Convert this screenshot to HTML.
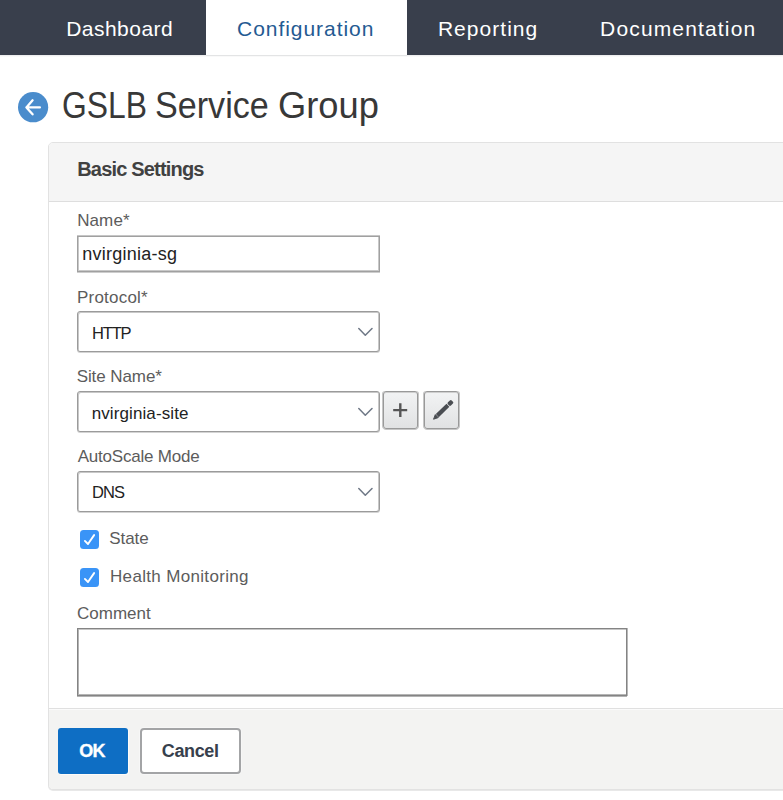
<!DOCTYPE html>
<html><head><meta charset="utf-8">
<style>
*{box-sizing:border-box;margin:0;padding:0}
html,body{width:783px;height:800px;overflow:hidden;background:#fff;font-family:"Liberation Sans",sans-serif;position:relative}
.a{position:absolute;white-space:nowrap;line-height:1}
#nav{position:absolute;left:0;top:0;width:783px;height:55px;background:#393f4c}
#navline{position:absolute;left:0;top:55px;width:783px;height:1px;background:#eeeeef;box-shadow:0 1px 0 #f9f9f9}
#navline2{position:absolute;left:206px;top:55px;width:201px;height:1px;background:#e3e4e5}
#tabw{position:absolute;left:206px;top:0;width:201px;height:55px;background:#fff}
.tab{font-size:21px;color:#fff}
.tt{font-size:36.5px;color:#383838}
#panel{position:absolute;left:48px;top:142px;width:800px;height:648px;border:1px solid #e2e2e2;border-radius:5px;box-shadow:0 1px 0 #e8e8e8;background:#fff;overflow:hidden}
#phead{position:absolute;left:0;top:0;width:100%;height:59px;background:#f5f5f5;border-bottom:1px solid #dedede}
#pfoot{position:absolute;left:0;top:565px;width:100%;height:84px;background:#f3f3f2;border-top:1px solid #e0e0e0;box-shadow:inset 0 1px 0 #fbfbfb}
.lbl{font-size:17px;color:#5c5c5c}
.val{color:#222}
.inp{position:absolute;border:1px solid #a0a0a0;background:#fff;box-shadow:0 -1px 0 #c6c6c6,0 1px 0 #cdcdcd,inset 1px 0 0 #c8c8c8,inset -1px 0 0 #c8c8c8,inset 0 -1px 0 #c8c8c8}
.ta{position:absolute;border:1px solid #848484;background:#fff;box-shadow:0 1px 0 #b3b3b3,1px 0 0 #b8b8b8,inset 1px 0 0 #b3b3b3,inset 0 1px 0 #c6c6c6,inset 0 -1px 0 #b5b5b5}
.sel{position:absolute;border:1px solid #9b9b9b;border-radius:3px;background:#fff;box-shadow:inset 1px 1px 0 #c8c8c8,inset -1px 0 0 #c8c8c8,0 1px 0 #d4d4d4}
.btn{position:absolute;border:1px solid #999;border-radius:3px;background:linear-gradient(#f2f3f4,#e1e2e3);box-shadow:0 1px 0 #c6c6c6,-1px 0 0 #c6c6c6,1px 0 0 #c6c6c6,inset 0 1px 0 #cfcfcf}
.cb{position:absolute;width:19px;height:19px;border-radius:3.5px;background:#3a94f7}
</style></head><body>
<div id="nav"></div>
<div id="navline"></div>
<div id="tabw"></div>
<div id="navline2"></div>
<div class="a tab" style="left:66.2px;top:18px;letter-spacing:0.47px">Dashboard</div>
<div class="a tab" style="left:237px;top:18px;letter-spacing:0.96px;color:#245a92">Configuration</div>
<div class="a tab" style="left:437.9px;top:18px;letter-spacing:1.04px">Reporting</div>
<div class="a tab" style="left:600.1px;top:18px;letter-spacing:1.15px">Documentation</div>

<svg style="position:absolute;left:18px;top:92px" width="31" height="31" viewBox="0 0 31 31">
<circle cx="15.1" cy="15.2" r="15.1" fill="#4a8ccc"/>
<path d="M14.6 8.3 L8.4 15.4 L14.6 22.3 M8.4 15.4 L21.9 15.4" stroke="#fff" stroke-width="2.3" fill="none" stroke-linecap="round" stroke-linejoin="round"/>
</svg>
<div class="a tt" style="left:61.9px;top:88.2px;transform:scaleX(0.872);transform-origin:0 0">GSLB</div>
<div class="a tt" style="left:155.3px;top:88.2px;transform:scaleX(0.935);transform-origin:0 0">Service</div>
<div class="a tt" style="left:278px;top:88.2px;transform:scaleX(0.994);transform-origin:0 0">Group</div>

<div id="panel">
  <div id="phead"></div>
  <div id="pfoot"></div>
</div>
<div class="a" style="left:77.2px;top:159px;font-size:20px;font-weight:bold;color:#414141;letter-spacing:-0.81px">Basic Settings</div>

<div class="a lbl" style="left:77.2px;top:211.7px;letter-spacing:0.1px">Name*</div>
<div class="inp" style="left:77px;top:236px;width:303px;height:36px"></div>
<div class="a val" style="left:82.3px;top:245px;font-size:18px;letter-spacing:0.25px">nvirginia-sg</div>

<div class="a lbl" style="left:77.0px;top:288.7px;letter-spacing:0.21px">Protocol*</div>
<div class="sel" style="left:77px;top:311px;width:303px;height:41px"></div>
<svg style="position:absolute;left:350px;top:311px" width="30" height="30" viewBox="0 0 30 30"><path d="M8.8 17.5 L15.3 24.2 L22 17.5" stroke="#707987" stroke-width="1.55" fill="none" stroke-linecap="round" stroke-linejoin="round"/></svg>
<div class="a val" style="left:92.1px;top:324.8px;font-size:16.5px;letter-spacing:-1.2px">HTTP</div>

<div class="a lbl" style="left:76.7px;top:368.2px;letter-spacing:-0.09px">Site Name*</div>
<div class="sel" style="left:77px;top:391px;width:303px;height:41px"></div>
<svg style="position:absolute;left:350px;top:391px" width="30" height="30" viewBox="0 0 30 30"><path d="M8.8 17.5 L15.3 24.2 L22 17.5" stroke="#707987" stroke-width="1.55" fill="none" stroke-linecap="round" stroke-linejoin="round"/></svg>
<div class="a val" style="left:91.7px;top:405.1px;font-size:17px;letter-spacing:0.1px">nvirginia-site</div>
<div class="btn" style="left:383px;top:391px;width:35px;height:38px"></div>
<div class="btn" style="left:424px;top:391px;width:35px;height:38px"></div>
<svg style="position:absolute;left:383px;top:391px" width="35" height="38" viewBox="0 0 35 38"><path d="M10.2 19.1 H24.2 M17.3 12.2 V25.9" stroke="#555" stroke-width="2.4" fill="none"/></svg>
<svg style="position:absolute;left:424px;top:391px" width="35" height="38" viewBox="0 0 35 38"><g transform="translate(18.9 19.2) rotate(-44)" fill="#4a4d52"><path d="M-13 0 L-8.5 -2.1 L-8.5 2.1 Z" stroke="#4a4d52" stroke-width="0.9" stroke-linejoin="round"/><rect x="-7.8" y="-2.1" width="14.8" height="4.2"/><rect x="7.8" y="-2.2" width="5.3" height="4.4" rx="1.3"/></g></svg>

<div class="a lbl" style="left:77.7px;top:448.1px;letter-spacing:-0.21px">AutoScale Mode</div>
<div class="sel" style="left:77px;top:471px;width:303px;height:41px"></div>
<svg style="position:absolute;left:350px;top:471px" width="30" height="30" viewBox="0 0 30 30"><path d="M8.8 17.5 L15.3 24.2 L22 17.5" stroke="#707987" stroke-width="1.55" fill="none" stroke-linecap="round" stroke-linejoin="round"/></svg>
<div class="a val" style="left:91.9px;top:484px;font-size:16.5px;letter-spacing:-0.9px">DNS</div>

<div class="cb" style="left:80px;top:530px"></div><svg style="position:absolute;left:80px;top:530px" width="19" height="19" viewBox="0 0 19 19"><path d="M4.9 10.9 L8 14 L14.1 5.1" stroke="#fff" stroke-width="1.9" fill="none" stroke-linecap="round" stroke-linejoin="round"/></svg>
<div class="a lbl" style="left:109.2px;top:529.7px;letter-spacing:-0.05px">State</div>
<div class="cb" style="left:80px;top:568px"></div><svg style="position:absolute;left:80px;top:568px" width="19" height="19" viewBox="0 0 19 19"><path d="M4.9 10.9 L8 14 L14.1 5.1" stroke="#fff" stroke-width="1.9" fill="none" stroke-linecap="round" stroke-linejoin="round"/></svg>
<div class="a lbl" style="left:110px;top:567.9px;letter-spacing:0.33px">Health Monitoring</div>

<div class="a lbl" style="left:77px;top:605.3px;letter-spacing:0.0px">Comment</div>
<div class="ta" style="left:77px;top:628px;width:550px;height:68px"></div>

<div style="position:absolute;left:58px;top:728px;width:70px;height:46px;background:#0e6ec4;border-radius:3px;box-shadow:1px 1px 0 #fdfbf8"></div>
<div class="a" style="left:79.2px;top:741.7px;font-size:18px;font-weight:bold;color:#fff;letter-spacing:-0.7px;-webkit-text-stroke:0.35px #fff">OK</div>
<div style="position:absolute;left:140px;top:728px;width:101px;height:46px;background:#fff;border:2px solid #a3a4a6;border-radius:4px;box-shadow:0 0 0 1px #f7f7f7"></div>
<div class="a" style="left:161.8px;top:741.7px;font-size:18px;font-weight:bold;color:#37404c;letter-spacing:-0.38px">Cancel</div>
</body></html>
